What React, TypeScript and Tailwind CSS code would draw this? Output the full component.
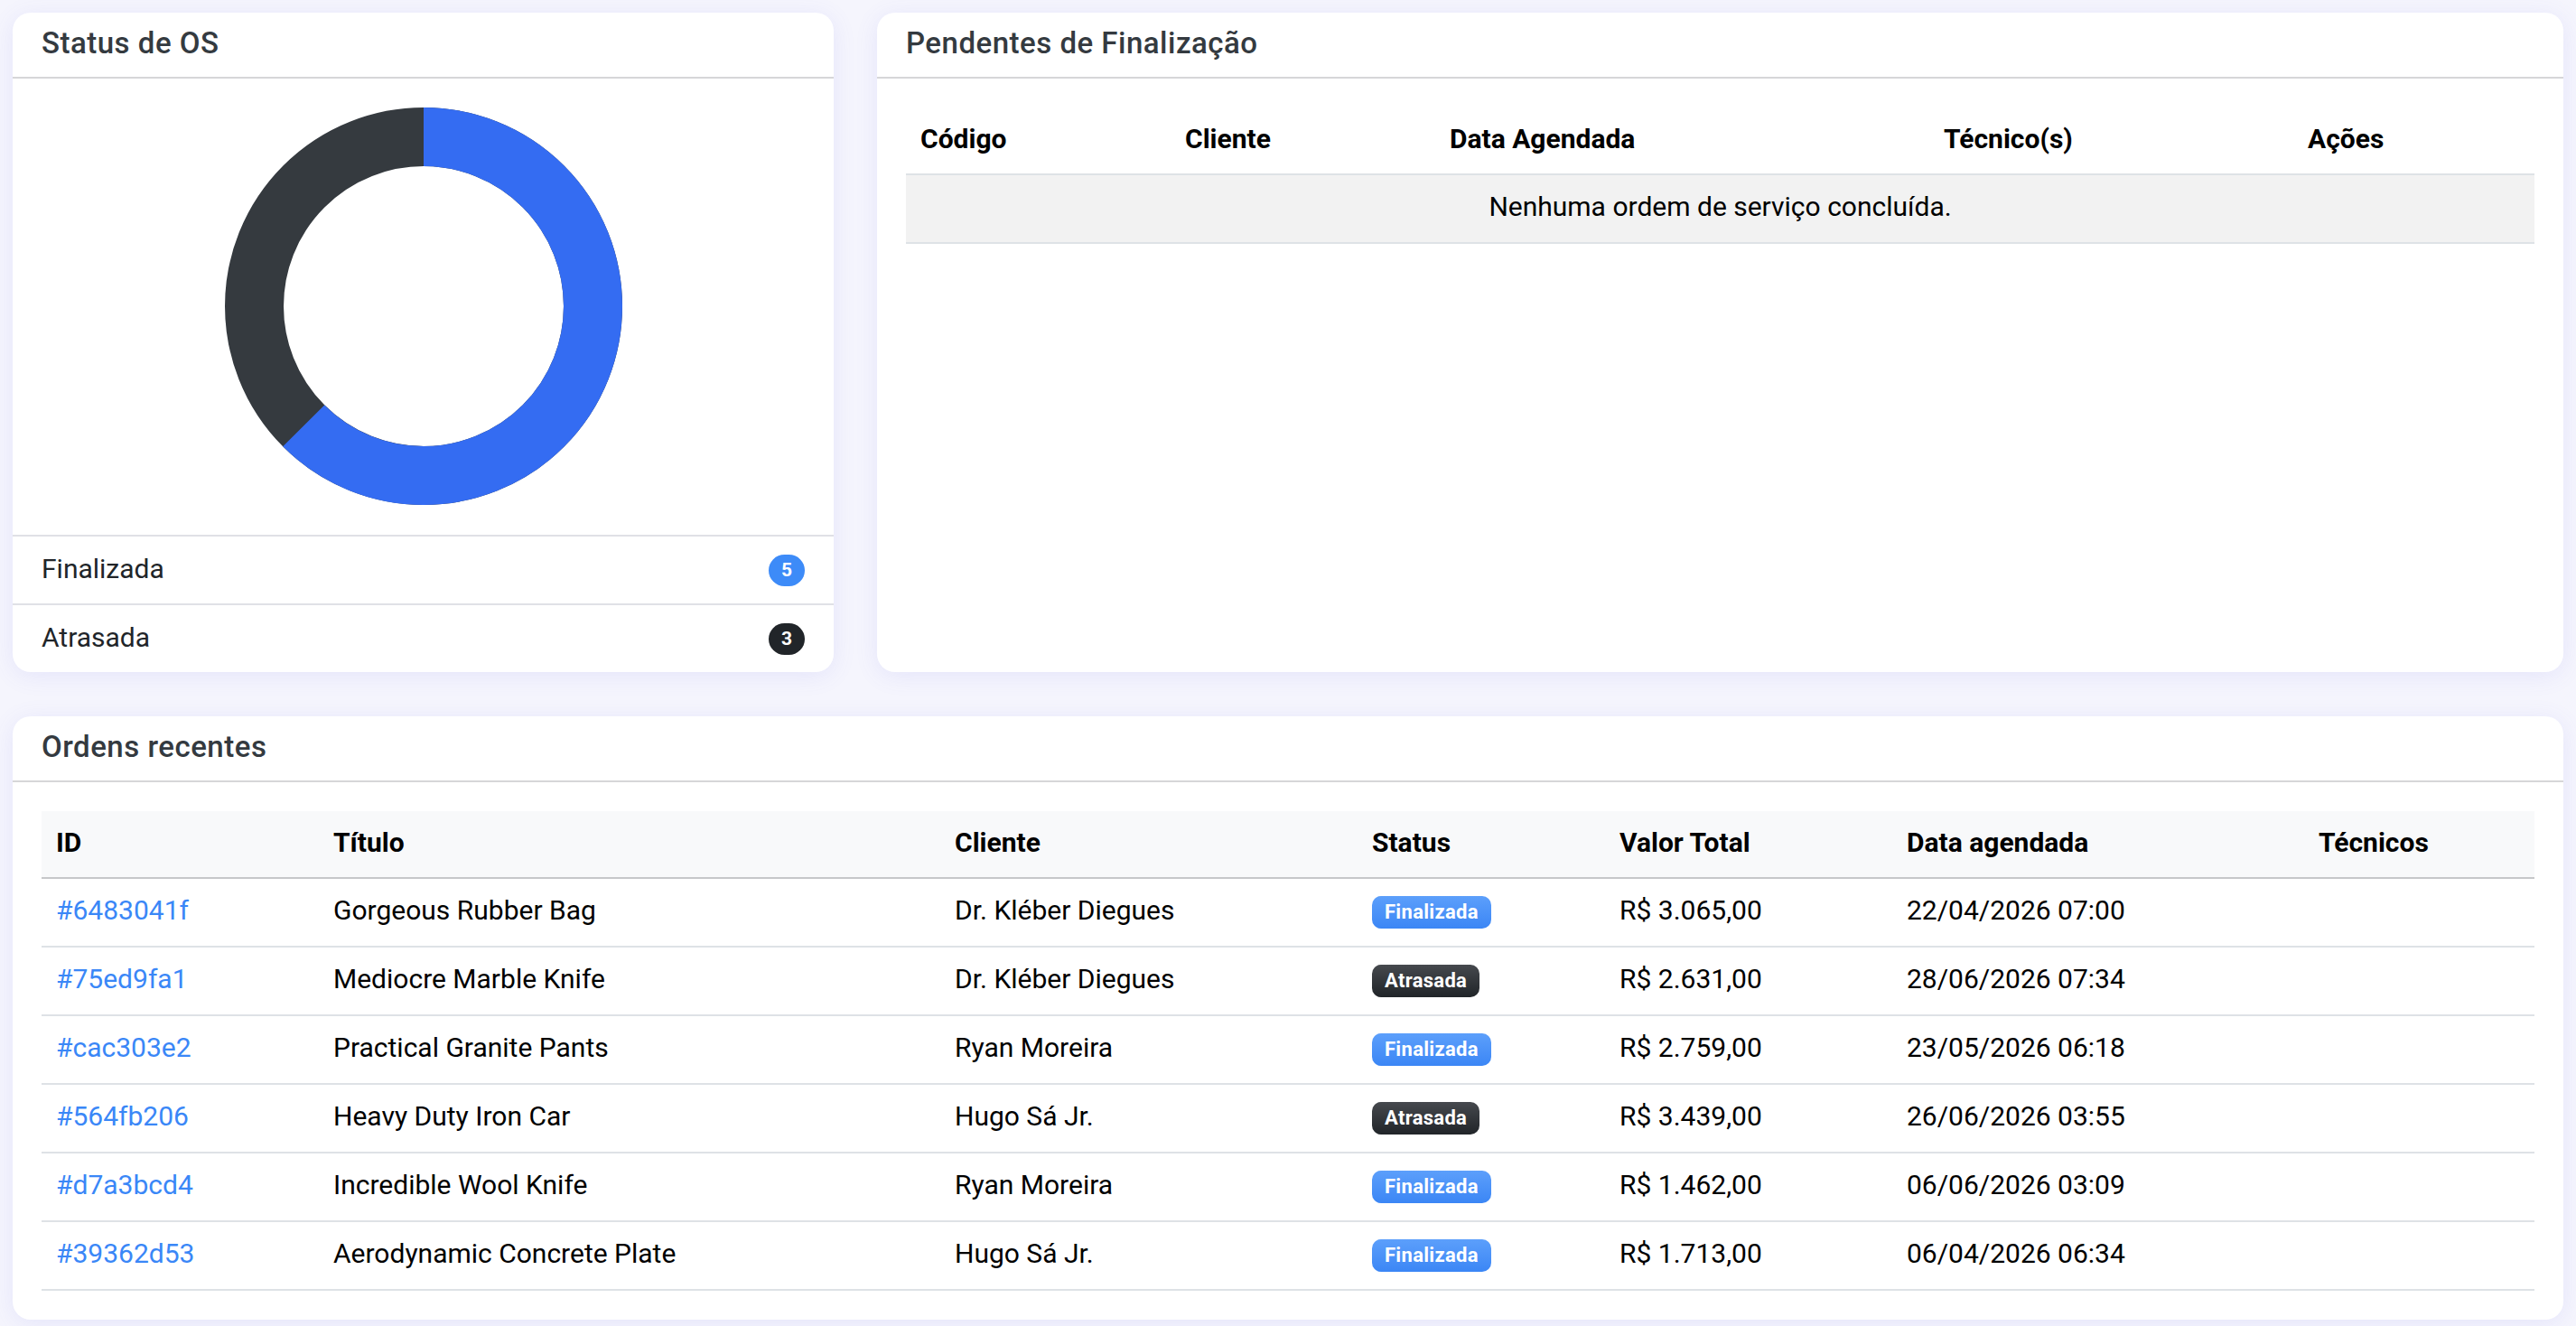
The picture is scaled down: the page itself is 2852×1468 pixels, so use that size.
import React from "react";

type Order = {
  id: string;
  title: string;
  client: string;
  status: "Finalizada" | "Atrasada";
  total: string;
  date: string;
};

const orders: Order[] = [
  { id: "#6483041f", title: "Gorgeous Rubber Bag", client: "Dr. Kléber Diegues", status: "Finalizada", total: "R$ 3.065,00", date: "22/04/2026 07:00" },
  { id: "#75ed9fa1", title: "Mediocre Marble Knife", client: "Dr. Kléber Diegues", status: "Atrasada", total: "R$ 2.631,00", date: "28/06/2026 07:34" },
  { id: "#cac303e2", title: "Practical Granite Pants", client: "Ryan Moreira", status: "Finalizada", total: "R$ 2.759,00", date: "23/05/2026 06:18" },
  { id: "#564fb206", title: "Heavy Duty Iron Car", client: "Hugo Sá Jr.", status: "Atrasada", total: "R$ 3.439,00", date: "26/06/2026 03:55" },
  { id: "#d7a3bcd4", title: "Incredible Wool Knife", client: "Ryan Moreira", status: "Finalizada", total: "R$ 1.462,00", date: "06/06/2026 03:09" },
  { id: "#39362d53", title: "Aerodynamic Concrete Plate", client: "Hugo Sá Jr.", status: "Finalizada", total: "R$ 1.713,00", date: "06/04/2026 06:34" },
];

const statusCounts = [
  { label: "Finalizada", count: 5, badge: "bg-[#3d8bf8]" },
  { label: "Atrasada", count: 3, badge: "bg-[#212529]" },
];

const cardClass =
  "bg-white rounded-[20px] shadow-[0_4px_26px_rgba(96,96,230,0.11)] overflow-hidden";

const CardHeader: React.FC<{ title: string }> = ({ title }) => (
  <div className="h-[73px] flex items-center px-8 pb-1 border-b-2 border-[#d6d6d8]">
    <h2 className="text-[33px] font-medium text-[#343a40] tracking-[0.5px]">
      {title}
    </h2>
  </div>
);

// Donut with finished (blue) and late (dark) slices, starting at 12 o'clock
const StatusDonut: React.FC<{ done: number; late: number }> = ({ done, late }) => {
  const r = 187.5;
  const c = 2 * Math.PI * r;
  const doneLen = (done / (done + late)) * c;
  return (
    <svg width="440" height="440" viewBox="0 0 440 440">
      <g transform="rotate(-90 220 220)">
        <circle cx="220" cy="220" r={r} fill="none" stroke="#353a3f" strokeWidth="65" />
        <circle
          cx="220"
          cy="220"
          r={r}
          fill="none"
          stroke="#346cf2"
          strokeWidth="65"
          strokeDasharray={`${doneLen} ${c}`}
        />
      </g>
    </svg>
  );
};

const StatusBadge: React.FC<{ status: Order["status"] }> = ({ status }) => {
  const color =
    status === "Finalizada"
      ? "bg-[#3d8bfd] bg-gradient-to-b from-[#5c9ffb] to-[#3b86f5]"
      : "bg-[#212529] bg-gradient-to-b from-[#46494e] to-[#212529]";
  return (
    <span
      className={`inline-block align-middle rounded-[10px] px-[14px] py-[7px] text-[22px] leading-none font-bold text-white tracking-[0.3px] ${color}`}
    >
      {status}
    </span>
  );
};

const pendingCols = [
  { label: "Código", w: "w-[293px]" },
  { label: "Cliente", w: "w-[293px]" },
  { label: "Data Agendada", w: "w-[547px]" },
  { label: "Técnico(s)", w: "w-[403px]" },
  { label: "Ações", w: "w-[267px]" },
];

const recentCols = [
  { label: "ID", w: "w-[307px]" },
  { label: "Título", w: "w-[688px]" },
  { label: "Cliente", w: "w-[462px]" },
  { label: "Status", w: "w-[274px]" },
  { label: "Valor Total", w: "w-[318px]" },
  { label: "Data agendada", w: "w-[456px]" },
  { label: "Técnicos", w: "w-[255px]" },
];

const App: React.FC = () => {
  const cell = "px-4 pt-[14px] pb-[18px] leading-[42px] border-b-2 border-[#dee2e6] text-left";
  const head = "px-4 pt-[14px] pb-[17px] leading-[42px] text-left font-bold";

  return (
    <div
      className="min-h-screen bg-[#f5f5fd] px-[14px] pt-[14px] pb-[7px] text-[30px] text-black"
      style={{ fontFamily: "Roboto, 'Liberation Sans', sans-serif" }}
    >
      <div className="grid grid-cols-[909px_1fr] gap-x-12">
        {/* Status de OS */}
        <div className={`${cardClass} flex flex-col`}>
          <CardHeader title="Status de OS" />
          <div className="flex justify-center pt-8 pb-[33px]">
            <StatusDonut done={5} late={3} />
          </div>
          <ul>
            {statusCounts.map((s) => (
              <li
                key={s.label}
                className="h-[76px] flex items-center justify-between px-8 border-t-2 border-[#e0e1e6]"
              >
                <span className="text-[#212529] pb-1">{s.label}</span>
                <span
                  className={`${s.badge} text-white text-[21px] font-bold leading-none rounded-full px-[14px] py-[7px]`}
                >
                  {s.count}
                </span>
              </li>
            ))}
          </ul>
        </div>

        {/* Pendentes de Finalização */}
        <div className={cardClass}>
          <CardHeader title="Pendentes de Finalização" />
          <div className="p-8">
            <table className="w-full table-fixed border-separate border-spacing-0">
              <thead>
                <tr>
                  {pendingCols.map((c) => (
                    <th key={c.label} className={`${head} ${c.w} border-b-2 border-[#dee2e6]`}>
                      {c.label}
                    </th>
                  ))}
                </tr>
              </thead>
              <tbody>
                <tr>
                  <td
                    colSpan={5}
                    className="px-4 pt-[14px] pb-[18px] leading-[42px] text-center bg-[#f2f2f2] border-b-2 border-[#dee2e6]"
                  >
                    Nenhuma ordem de serviço concluída.
                  </td>
                </tr>
              </tbody>
            </table>
          </div>
        </div>
      </div>

      {/* Ordens recentes */}
      <div className={`${cardClass} mt-[49px]`}>
        <CardHeader title="Ordens recentes" />
        <div className="px-8 pt-8 pb-8">
          <table className="w-full table-fixed border-separate border-spacing-0">
            <thead className="bg-[#f8f9fa]">
              <tr>
                {recentCols.map((c) => (
                  <th key={c.label} className={`${head} ${c.w} border-b-2 border-[#c6c7c9]`}>
                    {c.label}
                  </th>
                ))}
              </tr>
            </thead>
            <tbody>
              {orders.map((o) => (
                <tr key={o.id}>
                  <td className={cell}>
                    <a href="#" className="text-[#3a87f7]">
                      {o.id}
                    </a>
                  </td>
                  <td className={cell}>{o.title}</td>
                  <td className={cell}>{o.client}</td>
                  <td className={cell}>
                    <StatusBadge status={o.status} />
                  </td>
                  <td className={cell}>{o.total}</td>
                  <td className={cell}>{o.date}</td>
                  <td className={cell}></td>
                </tr>
              ))}
            </tbody>
          </table>
        </div>
      </div>
    </div>
  );
};

export default App;
